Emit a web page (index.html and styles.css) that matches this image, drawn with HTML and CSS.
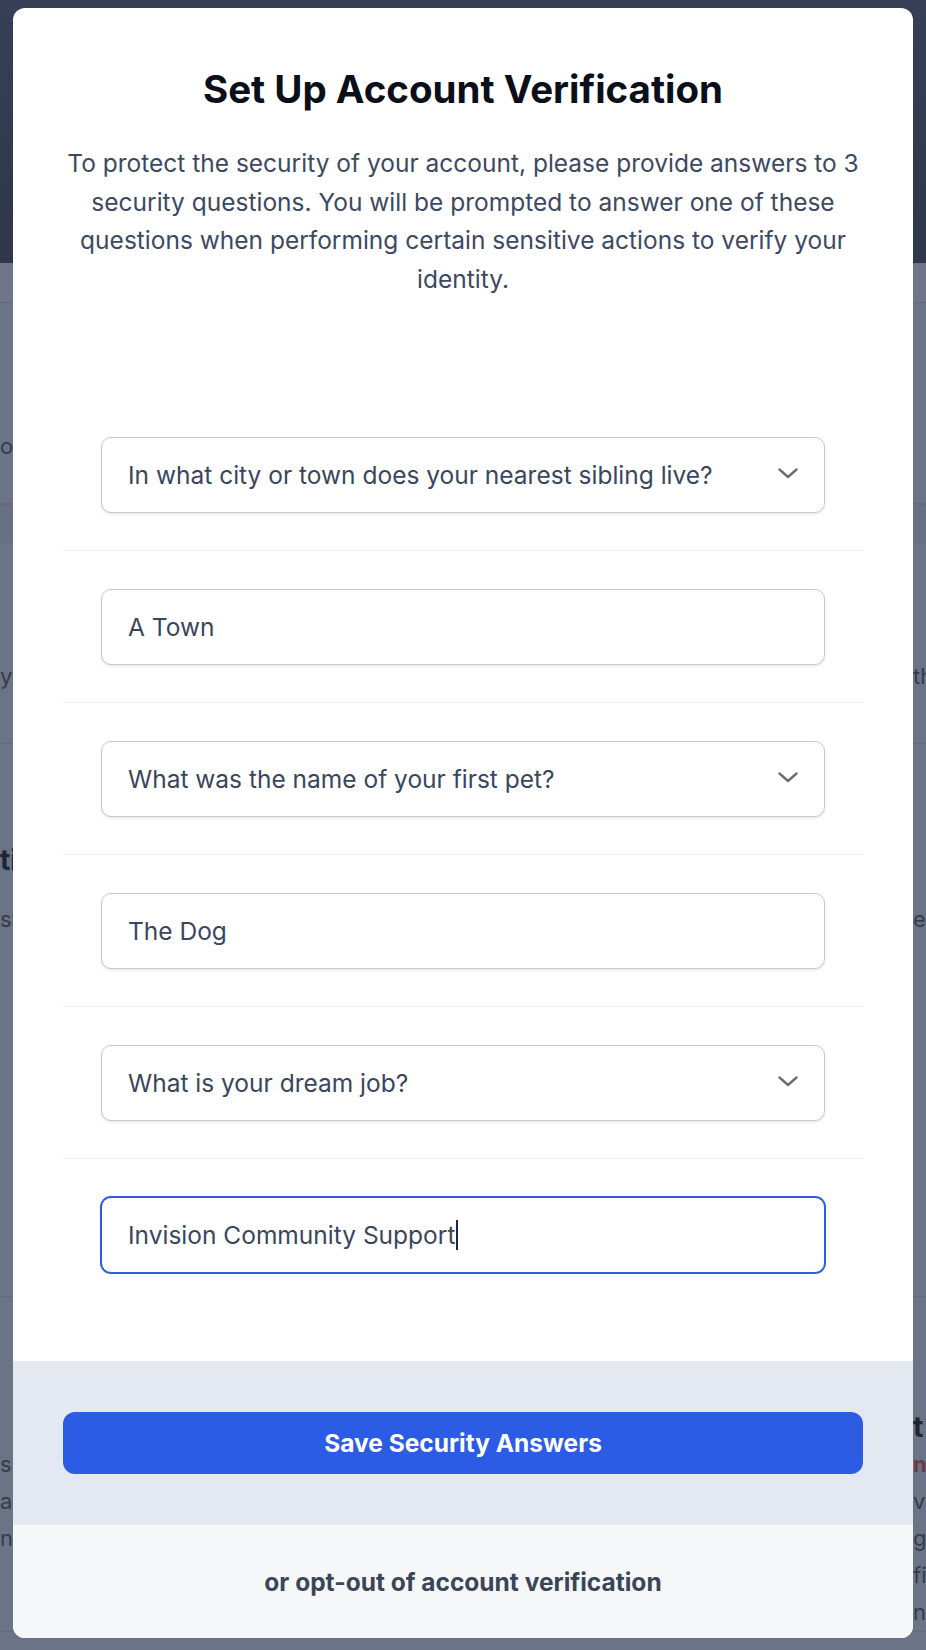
FILE: index.html
```html
<!DOCTYPE html>
<html lang="en">
<head>
  <meta charset="UTF-8">
  <title>Set Up Account Verification</title>
  <meta name="viewport" content="width=device-width, initial-scale=1.0">
  <link rel="stylesheet" href="styles.css">
</head>
<body>

<!-- page behind the dialog, dimmed -->
<div class="page">
  <div class="page-header"></div>
  <div class="page-band"></div>
  <div class="page-section sec-a">
    <div class="bg-row" style="padding-top: 125px;"><span>or</span><span></span></div>
  </div>
  <div class="page-band dark"></div>
  <div class="page-section sec-c">
    <div class="bg-row" style="padding-top: 115px;"><span>y</span><span>th</span></div>
  </div>
  <div class="page-section sec-d">
    <div class="bg-row strong" style="padding-top: 98px;"><span>ti</span><span></span></div>
    <div class="bg-row" style="padding-top: 22px;"><span>sw</span><span>e'l</span></div>
  </div>
  <div class="page-section sec-e">
    <div class="bg-row" style="padding-top: 112px;"><span></span><span class="strong">t i</span></div>
    <div class="bg-row"><span>s</span><span class="red">nt</span></div>
    <div class="bg-row"><span>ar</span><span>ve</span></div>
    <div class="bg-row"><span>nr</span><span>g</span></div>
    <div class="bg-row"><span></span><span>fia</span></div>
    <div class="bg-row"><span></span><span>na</span></div>
  </div>
</div>

<div class="modal">
  <div class="modal-body">
    <h2>Set Up Account Verification</h2>
    <p class="intro">To protect the security of your account, please provide answers to 3 security questions. You will be prompted to answer one of these questions when performing certain sensitive actions to verify your identity.</p>

    <div class="question-list">
      <div class="question-row">
        <div class="select-wrap">
          <select class="field">
            <option>In what city or town does your nearest sibling live?</option>
          </select>
          <svg class="chevron" width="20" height="11" viewBox="0 0 20 11"><polyline points="1.5,1.5 10,9 18.5,1.5" fill="none" stroke="#6e6e6e" stroke-width="2.4" stroke-linecap="round" stroke-linejoin="round"/></svg>
        </div>
      </div>
      <div class="question-row">
        <input class="field" type="text" value="A Town">
      </div>
      <div class="question-row">
        <div class="select-wrap">
          <select class="field">
            <option>What was the name of your first pet?</option>
          </select>
          <svg class="chevron" width="20" height="11" viewBox="0 0 20 11"><polyline points="1.5,1.5 10,9 18.5,1.5" fill="none" stroke="#6e6e6e" stroke-width="2.4" stroke-linecap="round" stroke-linejoin="round"/></svg>
        </div>
      </div>
      <div class="question-row">
        <input class="field" type="text" value="The Dog">
      </div>
      <div class="question-row">
        <div class="select-wrap">
          <select class="field">
            <option>What is your dream job?</option>
          </select>
          <svg class="chevron" width="20" height="11" viewBox="0 0 20 11"><polyline points="1.5,1.5 10,9 18.5,1.5" fill="none" stroke="#6e6e6e" stroke-width="2.4" stroke-linecap="round" stroke-linejoin="round"/></svg>
        </div>
      </div>
      <div class="question-row">
        <div class="field focused">Invision Community Support<span class="caret"></span></div>
      </div>
    </div>
  </div>

  <div class="modal-actions">
    <button type="button" class="btn">Save Security Answers</button>
  </div>
  <div class="modal-footer">or opt-out of account verification</div>
</div>

</body>
</html>
```

FILE: styles.css
```css
* {
  box-sizing: border-box;
  font-family: Inter, "Noto Sans", sans-serif;
}

body {
  margin: 0;
  background: #6b7386;
  height: 1650px;
  overflow: hidden;
  position: relative;
}

/* dimmed page behind */
.page-header {
  height: 263px;
  background: linear-gradient(#363f55, #2f3749);
}

.page-band {
  height: 40px;
  background: #6e7688;
  border-bottom: 1px solid #626a7c;
}

.page-band.dark {
  height: 39px;
  background: #687083;
  border-top: 1px solid #626a7c;
}

.page-section {
  border-bottom: 1px solid #626a7c;
}

.sec-a { height: 201px; }
.sec-c { height: 201px; }
.sec-d { height: 553px; }

.bg-row {
  display: grid;
  grid-template-columns: 913px 1fr;
  font-size: 22px;
  line-height: 37px;
  color: #353c4b;
  white-space: nowrap;
  overflow: hidden;
}

.bg-row.strong,
.bg-row .strong {
  font-weight: 700;
  font-size: 28px;
  color: #1f2532;
}

.bg-row .red {
  color: #6e3a45;
  font-weight: 700;
}

/* dialog */
.modal {
  position: absolute;
  top: 8px;
  left: 13px;
  width: 900px;
  height: 1630px;
  background: #fff;
  border-radius: 12px;
  overflow: hidden;
  display: flex;
  flex-direction: column;
}

.modal-body {
  padding: 58px 50px 51px;
}

h2 {
  margin: 0;
  text-align: center;
  font-size: 38.5px;
  line-height: 46px;
  font-weight: 700;
  color: #0b0f19;
}

.intro {
  margin: 32px -6px 0;
  text-align: center;
  font-size: 24.5px;
  line-height: 38.6px;
  color: #3d4962;
}

.question-list {
  margin-top: 101px;
}

.question-row {
  padding: 38px 38px 37px;
  border-bottom: 1px solid #eceef2;
}

.question-row:last-child {
  border-bottom: none;
}

.select-wrap {
  position: relative;
}

.field {
  display: block;
  width: 100%;
  height: 76px;
  padding: 0 26px;
  border: 1px solid #c3c7d1;
  border-radius: 10px;
  background: #fff;
  box-shadow: 0 2px 3px rgba(15, 23, 42, 0.08);
  font-size: 24.5px;
  color: #3a465e;
  outline: none;
  appearance: none;
  -webkit-appearance: none;
}

.chevron {
  position: absolute;
  top: 31px;
  right: 27px;
  pointer-events: none;
}

.field.focused {
  display: flex;
  align-items: center;
  border-color: #2b5ce6;
  box-shadow: 0 0 0 1px #2b5ce6;
}

.caret {
  display: inline-block;
  width: 2px;
  height: 30px;
  background: #1e2638;
  margin-left: 1px;
}

.modal-actions {
  background: #e4e8f0;
  padding: 51px 50px;
}

.btn {
  width: 100%;
  height: 62px;
  background: #2c5ce4;
  color: #fff;
  border: none;
  border-radius: 12px;
  font-size: 24.5px;
  font-weight: 700;
  cursor: pointer;
}

.modal-footer {
  flex: 1;
  background: #f6f7f9;
  display: flex;
  align-items: center;
  justify-content: center;
  font-size: 24.5px;
  font-weight: 700;
  color: #3a455a;
}
```
